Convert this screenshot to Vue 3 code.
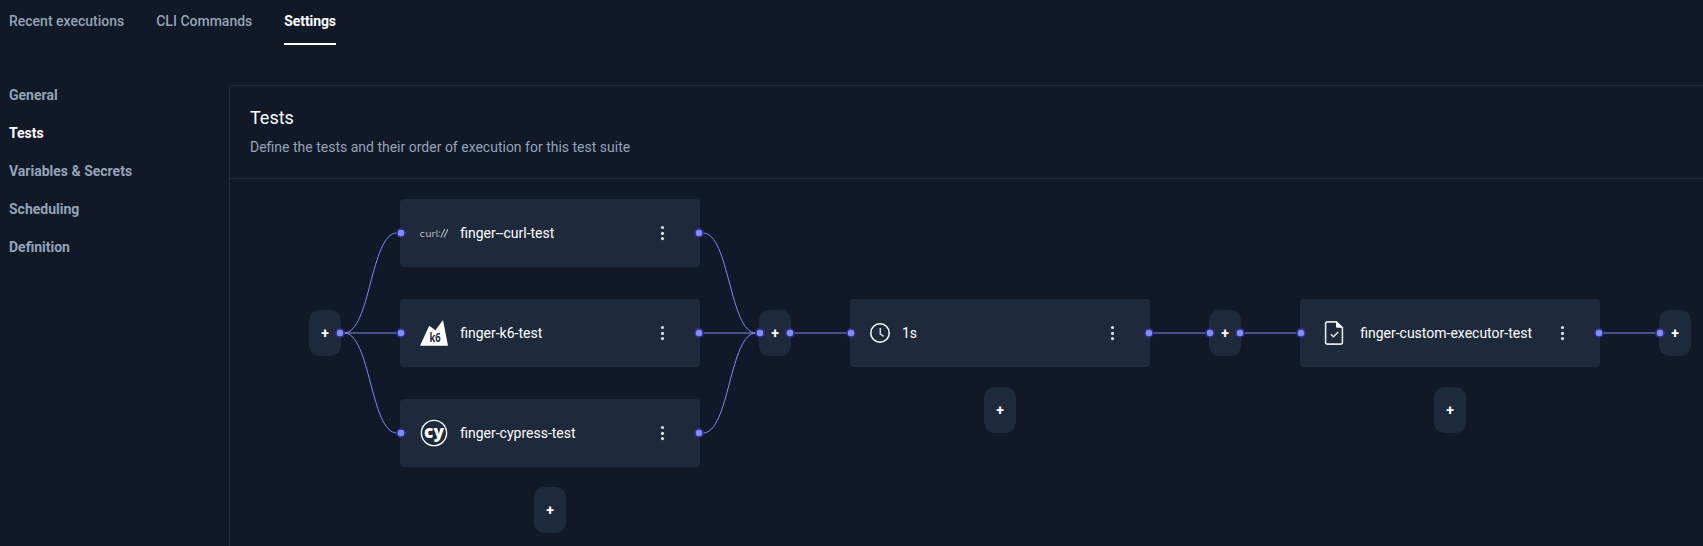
<script setup>
const tabs = ['Recent executions', 'CLI Commands', 'Settings']
const sections = ['General', 'Tests', 'Variables & Secrets', 'Scheduling', 'Definition']

// Canvas coordinates, relative to the top-left corner of the flow area.
const tests = [
  { x: 170, y: 20, icon: 'curl', name: 'finger--curl-test' },
  { x: 170, y: 120, icon: 'k6', name: 'finger-k6-test' },
  { x: 170, y: 220, icon: 'cypress', name: 'finger-cypress-test' },
  { x: 620, y: 120, icon: 'clock', name: '1s' },
  { x: 1070, y: 120, icon: 'file', name: 'finger-custom-executor-test' }
]
const adders = [
  [79, 131], [529, 131], [979, 131], [1429, 131],
  [304, 308], [754, 208], [1204, 208]
]
const handles = [
  [110, 154], [171, 54], [171, 154], [171, 254],
  [469, 54], [469, 154], [469, 254], [530, 154],
  [560, 154], [621, 154], [919, 154], [980, 154],
  [1010, 154], [1071, 154], [1369, 154], [1430, 154]
]
const links = [
  [114, 154, 167, 54], [114, 154, 167, 154], [114, 154, 167, 254],
  [473, 54, 526, 154], [473, 154, 526, 154], [473, 254, 526, 154],
  [564, 154, 617, 154], [923, 154, 976, 154],
  [1014, 154, 1067, 154], [1373, 154, 1426, 154]
]
const curve = ([x1, y1, x2, y2]) => {
  const mid = (x1 + x2) / 2
  return `M${x1} ${y1}C${mid} ${y1} ${mid} ${y2} ${x2} ${y2}`
}
</script>

<template>
  <div class="page">
    <nav class="tabs">
      <a v-for="t in tabs" :key="t" class="tab" :class="{ active: t === 'Settings' }">{{ t }}</a>
    </nav>
    <div class="body">
      <aside class="side">
        <a v-for="s in sections" :key="s" :class="{ active: s === 'Tests' }">{{ s }}</a>
      </aside>
      <main class="panel">
        <header class="head">
          <h1>Tests</h1>
          <p>Define the tests and their order of execution for this test suite</p>
        </header>
        <div class="canvas">
          <div
            v-for="t in tests"
            :key="t.name"
            class="node"
            :class="t.icon"
            :style="{ left: t.x + 'px', top: t.y + 'px' }"
          >
            <svg v-if="t.icon === 'curl'" class="icon" width="28" height="28" viewBox="0 0 28 28">
              <text x="-0.4" y="18" class="curl-text" textLength="18.8" lengthAdjust="spacingAndGlyphs">curl</text>
              <path d="M19.6 12.6v1.2M18.9 16.4v1.2M20.8 18.4l4-8.4M24 18.4l4-8.4" stroke="#a8acb2" stroke-width="1.2" />
            </svg>
            <svg v-else-if="t.icon === 'k6'" class="icon" width="28" height="28" viewBox="0 0 28 28">
              <path d="M0 26.8L9.2 6.7l6.2 4.5L23 1l5 25.8z" fill="#fff" />
              <text x="9.5" y="22.6" class="k6-text" textLength="11.2" lengthAdjust="spacingAndGlyphs">k6</text>
            </svg>
            <svg v-else-if="t.icon === 'cypress'" class="icon" width="28" height="28" viewBox="0 0 28 28">
              <circle cx="14" cy="14" r="12.6" fill="none" stroke="#fff" stroke-width="1.4" />
              <text x="4.1" y="19" class="cy-text" textLength="19.8" lengthAdjust="spacingAndGlyphs">cy</text>
            </svg>
            <svg v-else-if="t.icon === 'clock'" class="icon" width="20" height="20" viewBox="0 0 20 20">
              <circle cx="10" cy="10" r="9.25" fill="none" stroke="#fff" stroke-width="1.5" />
              <path d="M10.3 5v6l3.4 2.4" fill="none" stroke="#d5d8dd" stroke-width="1.5" />
            </svg>
            <svg v-else class="icon" width="28" height="28" viewBox="0 0 28 28">
              <path d="M16.2 2.9H7.3a1.7 1.7 0 0 0-1.7 1.7v18.8a1.7 1.7 0 0 0 1.7 1.7h13.4a1.7 1.7 0 0 0 1.7-1.7V8.6z" fill="none" stroke="#e3e6ea" stroke-width="1.6" />
              <path d="M16 2.3v5.2a1.3 1.3 0 0 0 1.3 1.3H23z" fill="#fff" />
              <path d="M10.8 15.2l2.6 2.6 4.8-4.8" fill="none" stroke="#e3e6ea" stroke-width="1.5" />
            </svg>
            <span class="name">{{ t.name }}</span>
            <svg class="more" width="5" height="16" viewBox="0 0 5 16">
              <circle cx="2.5" cy="2.5" r="1.55" />
              <circle cx="2.5" cy="8.4" r="1.55" />
              <circle cx="2.5" cy="13.6" r="1.55" />
            </svg>
          </div>
          <button
            v-for="([x, y], i) in adders"
            :key="i"
            class="add"
            :style="{ left: x + 'px', top: y + 'px' }"
          >+</button>
          <svg class="wires" width="1473" height="367">
            <path v-for="(l, i) in links" :key="i" :d="curve(l)" class="wire" />
            <circle v-for="([x, y], i) in handles" :key="i" :cx="x" :cy="y" r="4.15" class="handle" />
          </svg>
        </div>
      </main>
    </div>
  </div>
</template>

<style>
body {
  margin: 0;
  background: #111827;
}
</style>

<style scoped>
.page {
  box-sizing: border-box;
  height: 546px;
  overflow: hidden;
  padding-left: 9px;
  background: #111827;
  color: #94a3b8;
  font: 400 14px/22px Roboto, sans-serif;
}
.tabs {
  display: flex;
  gap: 32px;
  height: 45px;
}
.tab {
  box-sizing: border-box;
  padding-top: 10px;
  font-weight: 500;
}
.tab.active {
  width: 52px;
  border-bottom: 2px solid #fff;
  font-weight: 700;
  letter-spacing: -0.1px;
}
.active {
  color: #fff;
}
.body {
  display: flex;
  margin-top: 40px;
}
.side {
  display: flex;
  flex: 0 0 220px;
  flex-direction: column;
  gap: 16px;
  margin-top: -1px;
  font-weight: 700;
}
.panel {
  box-sizing: border-box;
  flex: 1 0 0;
  height: 470px;
  border: 1px solid #1e293b;
  border-right: 0;
  border-radius: 4px 0 0;
}
.head {
  box-sizing: border-box;
  height: 93px;
  padding: 21px 20px 0;
  border-bottom: 1px solid #1e293b;
}
h1 {
  margin: 0;
  color: #fff;
  font-size: 18px;
  font-weight: 400;
  line-height: 22px;
}
p {
  margin: 7px 0 0;
}
.canvas {
  position: relative;
  height: 367px;
}
.node {
  position: absolute;
  display: flex;
  box-sizing: border-box;
  width: 300px;
  height: 68px;
  align-items: center;
  padding: 0 35px 0 20px;
  border-radius: 4px;
  background: #1e293b;
  color: #fff;
}
.icon {
  flex: none;
}
.name {
  flex: 1;
  margin-left: 12.2px;
}
.clock .name {
  margin-left: 12px;
}
.more {
  flex: none;
  fill: #dfe2e6;
}
.add {
  position: absolute;
  width: 32px;
  height: 46px;
  padding: 0;
  border: 0;
  border-radius: 10px;
  background: #1e293b;
  color: #fff;
  font: 700 14px/22px Roboto, sans-serif;
}
.wires {
  position: absolute;
  top: 0;
  left: 0;
}
.wire {
  fill: none;
  stroke: #818cf8;
  stroke-width: 1;
}
.handle {
  fill: #818cf8;
  stroke: #312e81;
  stroke-width: 1.8;
}
.curl-text {
  fill: #b8bbc0;
  font: 400 9px "DejaVu Sans", sans-serif;
}
.k6-text {
  fill: #1e293b;
  font: 700 12px "Open Sans", sans-serif;
}
.cy-text {
  fill: #fff;
  font: 800 17px "Open Sans", sans-serif;
}
</style>
